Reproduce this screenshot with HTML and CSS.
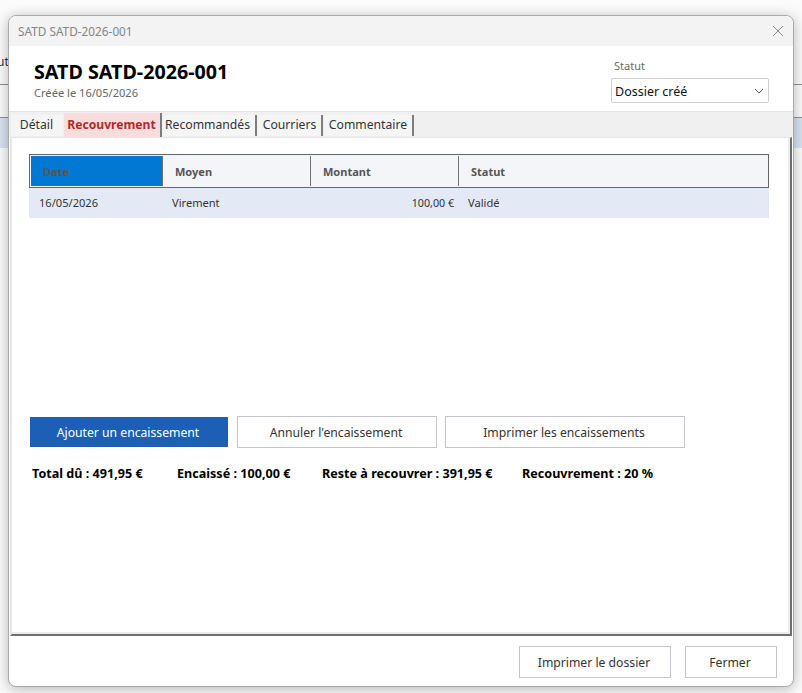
FILE: index.html
```html
<!DOCTYPE html>
<html lang="fr">
<head>
<meta charset="utf-8">
<title>SATD SATD-2026-001</title>
<link rel="stylesheet" href="styles.css">
</head>
<body>
<div class="backdrop">
  <div class="bg-text">ut</div>
  <div class="bg-line bg-line-a"></div>
  <div class="bg-line bg-line-b"></div>
  <div class="bg-row"></div>
</div>
<div class="window">
  <div class="titlebar">
    <span class="titlebar-text">SATD SATD-2026-001</span>
    <svg class="close" width="12" height="12" viewBox="0 0 12 12"><path d="M1 1L11 11M11 1L1 11" stroke="#8a8a8a" stroke-width="1" fill="none"/></svg>
  </div>
  <header class="head">
    <div class="head-left">
      <h1>SATD SATD-2026-001</h1>
      <div class="sub">Créée le 16/05/2026</div>
    </div>
    <div class="head-right">
      <div class="status-label">Statut</div>
      <div class="select"><span>Dossier créé</span>
        <svg width="10" height="6" viewBox="0 0 10 6"><path d="M1 1L5 5L9 1" stroke="#555" stroke-width="1" fill="none"/></svg>
      </div>
    </div>
  </header>
  <nav class="tabs">
    <div class="tab tab-first">Détail</div>
    <div class="tab tab-active">Recouvrement</div>
    <div class="tab tab-3">Recommandés</div>
    <div class="tab tab-4">Courriers</div>
    <div class="tab tab-5">Commentaire</div>
  </nav>
  <main class="panel">
    <div class="grid">
      <div class="grid-head">
        <div class="hcell hcell-selected">Date</div>
        <div class="hcell">Moyen</div>
        <div class="hcell">Montant</div>
        <div class="hcell hcell-last">Statut</div>
      </div>
      <div class="grid-row">
        <div class="cell">16/05/2026</div>
        <div class="cell">Virement</div>
        <div class="cell cell-right">100,00 €</div>
        <div class="cell">Validé</div>
      </div>
    </div>
    <div class="actions">
      <button class="btn btn-primary">Ajouter un encaissement</button>
      <button class="btn btn-cancel">Annuler l'encaissement</button>
      <button class="btn btn-print">Imprimer les encaissements</button>
    </div>
    <div class="totals">
      <span class="t1">Total dû : 491,95 €</span>
      <span class="t2">Encaissé : 100,00 €</span>
      <span class="t3">Reste à recouvrer : 391,95 €</span>
      <span>Recouvrement : 20 %</span>
    </div>
  </main>
  <footer class="foot">
    <button class="btn btn-doc">Imprimer le dossier</button>
    <button class="btn btn-close">Fermer</button>
  </footer>
</div>
</body>
</html>
```
FILE: styles.css
```css
* { box-sizing: border-box; }
html, body { margin: 0; height: 100%; }
body {
  background: #fafafa;
  font-family: "Noto Sans", "Open Sans", sans-serif;
  font-size: 12px;
  color: #222;
  overflow: hidden;
  position: relative;
}
.backdrop { position: absolute; inset: 0; background: #fbfbfb; }
.bg-text { position: absolute; left: -3px; top: 53px; font-size: 12px; color: #333; }
.bg-line { position: absolute; left: 0; right: 0; height: 1px; background: #8f8f8f; }
.bg-line-a { top: 84px; }
.bg-line-b { top: 117px; }
.bg-row { position: absolute; left: 0; right: 0; top: 118px; height: 30px; background: #d9e2f0; }
.window {
  position: absolute;
  left: 8px; top: 15px;
  width: 786px; height: 672px;
  background: #fff;
  border: 1px solid #a9a9a9;
  border-radius: 8px;
  box-shadow: 0 2px 14px rgba(0,0,0,.28);
  display: flex;
  flex-direction: column;
  overflow: hidden;
}
.titlebar {
  height: 30px;
  flex: none;
  background: #f3f3f3;
  display: flex;
  align-items: center;
  justify-content: space-between;
  padding: 0 9px;
}
.titlebar-text { font-size: 11.8px; color: #858585; }
.head {
  height: 66px;
  flex: none;
  display: flex;
  justify-content: space-between;
  padding: 14px 24px 0 25px;
  border-bottom: 1px solid #e4e4e4;
}
h1 { margin: 0; font-size: 19.7px; line-height: 24px; font-weight: 700; color: #000; }
.sub { font-size: 11.1px; line-height: 16px; color: #666; margin-top: 1px; }
.head-right { width: 158px; margin-top: -2px; }
.status-label { font-size: 11px; line-height: 16px; color: #6a6a6a; padding-left: 3px; }
.select {
  margin-top: 4px;
  height: 25px;
  border: 1px solid #cfcfcf;
  border-radius: 2px;
  background: #fff;
  display: flex;
  align-items: center;
  justify-content: space-between;
  padding: 1px 4px 0 3px;
  font-size: 12.5px;
  color: #111;
}
.tabs {
  height: 25px;
  flex: none;
  background: #f0f0f0;
  display: flex;
  align-items: flex-end;
  padding-left: 3px;
  gap: 1px;
}
.tab {
  height: 21px;
  margin-bottom: 1px;
  line-height: 20px;
  text-align: center;
  background: #f5f5f5;
  border-right: 2px solid #7d7d7d;
  font-size: 12.2px;
  color: #333;
}
.tab-first { width: 51px; border-right: 0; padding-right: 2px; }
.tab-3 { width: 94px; padding-right: 3px; }
.tab-4 { width: 65px; }
.tab-5 { width: 90px; }
.tab-active {
  width: 98px;
  height: 24px;
  margin-bottom: 0;
  line-height: 24px;
  background: #f9dcdc;
  color: #b02a2a;
  font-weight: 700;
  font-size: 12.15px;
  white-space: nowrap;
  padding-right: 1px;
}
.panel {
  flex: 1;
  background: #fff;
  border-top: 1px solid #e6e6e6;
  border-left: 2px solid #e8e8e8;
  margin-left: 1px;
  border-right: 2px solid #6f6f6f;
  border-bottom: 2px solid #6f6f6f;
  box-shadow: inset -2px -2px 0 #ededed;
  margin-right: 1px;
  padding: 16px 22px 0 17px;
}
.grid { width: 740px; }
.grid-head {
  display: grid;
  grid-template-columns: 132px 148px 148px 1fr;
  height: 34px;
  border: 1px solid #666;
  background: #f3f5f8;
  padding: 1px 0 0 1px;
}
.hcell {
  font-size: 11px;
  font-weight: 700;
  color: #555;
  padding-left: 12px;
  line-height: 31px;
  height: 30px;
  border-right: 1px solid #707070;
}
.hcell-selected { background: #0078d4; }
.hcell-last { border-right: 0; }
.grid-row {
  display: grid;
  grid-template-columns: 133px 148px 148px 1fr;
  height: 30px;
  background: #e3eaf5;
}
.cell { font-size: 11.1px; line-height: 30px; color: #333; padding-left: 10px; }
.cell-right { text-align: right; padding: 0 4px 0 0; font-size: 10.7px; }
.actions { display: flex; align-items: center; margin-top: 198px; height: 32px; padding-left: 1px; }
.btn {
  font-family: inherit;
  font-size: 12.2px;
  color: #333;
  background: #fff;
  border: 1px solid #c4c4cc;
  border-radius: 0;
  padding: 0 2px 0 0;
}
.btn-primary { width: 198px; height: 30px; background: #1c5fb4; border: 0; color: #fff; }
.btn-cancel { width: 200px; height: 32px; margin-left: 9px; }
.btn-print { width: 240px; height: 32px; margin-left: 8px; }
.totals { display: flex; margin-top: 17px; padding-left: 3px; font-size: 12.6px; line-height: 18px; font-weight: 700; color: #000; }
.t1 { width: 145px; }
.t2 { width: 145px; }
.t3 { width: 200px; }
.foot {
  height: 50px;
  flex: none;
  display: flex;
  justify-content: flex-end;
  align-items: flex-start;
  padding: 10px 16px 0 0;
  gap: 14px;
}
.btn-doc { width: 152px; height: 32px; }
.btn-close { width: 92px; height: 32px; }
```
